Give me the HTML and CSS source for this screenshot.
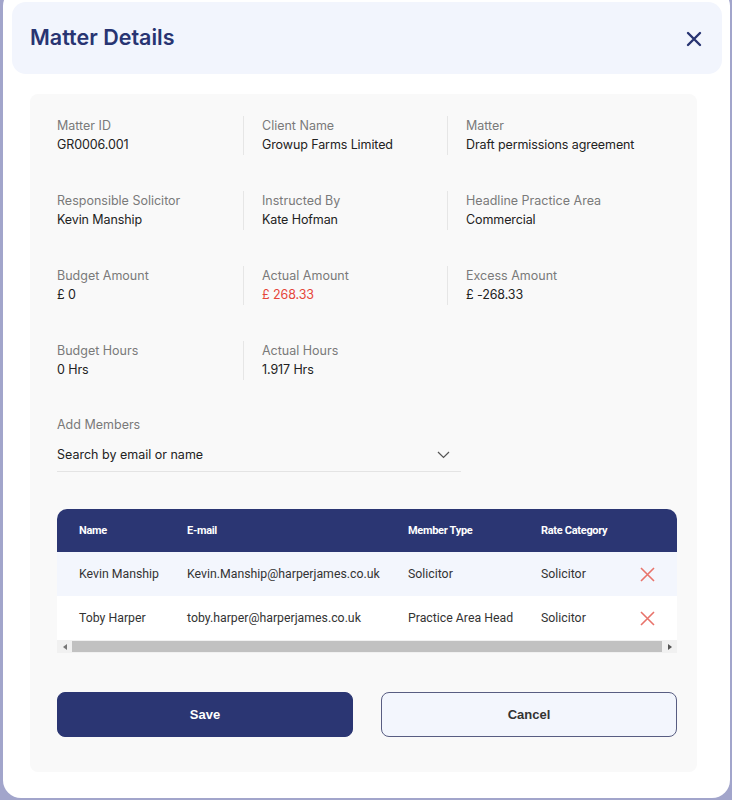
FILE: index.html
```html
<!DOCTYPE html>
<html>
<head>
<meta charset="utf-8">
<link rel="stylesheet" href="styles.css">
</head>
<body>
<div class="backdrop">
  <div class="modal">
    <div class="modal-header">
      <h1 class="title">Matter Details</h1>
      <button class="close" aria-label="Close">
        <svg width="16" height="16" viewBox="0 0 16 16"><path d="M2 2L14 14M14 2L2 14" stroke="#283472" stroke-width="2.4" stroke-linecap="round"/></svg>
      </button>
    </div>
    <div class="panel">
      <div class="info-grid">
        <div class="cell"><div class="label">Matter ID</div><div class="value">GR0006.001</div></div>
        <div class="cell div"><div class="label">Client Name</div><div class="value">Growup Farms Limited</div></div>
        <div class="cell div"><div class="label">Matter</div><div class="value">Draft permissions agreement</div></div>

        <div class="cell"><div class="label">Responsible Solicitor</div><div class="value">Kevin Manship</div></div>
        <div class="cell div"><div class="label">Instructed By</div><div class="value">Kate Hofman</div></div>
        <div class="cell div"><div class="label">Headline Practice Area</div><div class="value">Commercial</div></div>

        <div class="cell"><div class="label">Budget Amount</div><div class="value">£ 0</div></div>
        <div class="cell div"><div class="label">Actual Amount</div><div class="value red">£ 268.33</div></div>
        <div class="cell div"><div class="label">Excess Amount</div><div class="value">£ -268.33</div></div>

        <div class="cell"><div class="label">Budget Hours</div><div class="value">0 Hrs</div></div>
        <div class="cell div"><div class="label">Actual Hours</div><div class="value">1.917 Hrs</div></div>
      </div>

      <div class="members">
        <div class="label">Add Members</div>
        <div class="search">
          <span>Search by email or name</span>
          <svg width="13" height="8" viewBox="0 0 13 8"><path d="M1 1L6.5 6.5L12 1" fill="none" stroke="#555" stroke-width="1.2"/></svg>
        </div>
      </div>

      <div class="table-wrap">
        <table class="members-table">
          <thead>
            <tr><th class="c-name">Name</th><th class="c-mail">E-mail</th><th class="c-type">Member Type</th><th class="c-rate">Rate Category</th><th class="c-del"></th></tr>
          </thead>
          <tbody>
            <tr class="alt"><td>Kevin Manship</td><td>Kevin.Manship@harperjames.co.uk</td><td>Solicitor</td><td>Solicitor</td><td class="c-del"><svg width="15" height="15" viewBox="0 0 15 15"><path d="M1 1L14 14M14 1L1 14" stroke="#e8736b" stroke-width="1.6"/></svg></td></tr>
            <tr><td>Toby Harper</td><td>toby.harper@harperjames.co.uk</td><td>Practice Area Head</td><td>Solicitor</td><td class="c-del"><svg width="15" height="15" viewBox="0 0 15 15"><path d="M1 1L14 14M14 1L1 14" stroke="#e8736b" stroke-width="1.6"/></svg></td></tr>
          </tbody>
        </table>
        <div class="hscroll">
          <span class="arrow"><svg width="4" height="6" viewBox="0 0 4 6"><path d="M4 0L0 3L4 6Z" fill="#777"/></svg></span>
          <span class="thumb"></span>
          <span class="arrow"><svg width="4" height="6" viewBox="0 0 4 6"><path d="M0 0L4 3L0 6Z" fill="#555"/></svg></span>
        </div>
      </div>

      <div class="actions">
        <button class="btn save">Save</button>
        <button class="btn cancel">Cancel</button>
      </div>
    </div>
  </div>
</div>
</body>
</html>
```
FILE: styles.css
```css
* { box-sizing: border-box; }
html, body { margin: 0; padding: 0; }
body {
  width: 732px;
  height: 800px;
  overflow: hidden;
  background: #a2a5cb;
  font-family: "Inter", "DejaVu Sans", sans-serif;
}
.backdrop {
  padding-left: 3px;
  padding-right: 2px;
}
.modal {
  margin-top: -12px;
  height: 810px;
  background: #ffffff;
  border-radius: 18px;
  padding: 14px 8px 0 9px;
}
.modal-header {
  height: 72px;
  background: #f2f5fd;
  border-radius: 14px;
  display: flex;
  align-items: center;
  justify-content: space-between;
  padding: 0 20px 0 18px;
}
.title {
  margin: 0;
  font-size: 21.5px;
  font-weight: 600;
  color: #283472;
  letter-spacing: 0;
  position: relative;
  top: -1px;
}
.close {
  background: none;
  border: 0;
  padding: 0;
  width: 16px;
  height: 16px;
  display: flex;
  margin-top: 2px;
}
.panel {
  margin: 20px 25px 0 18px;
  background: #f9f9f9;
  border-radius: 8px;
  height: 678px;
  padding: 22px 28px 0 27px;
}
.info-grid {
  display: grid;
  grid-template-columns: 186px 204px 1fr;
  row-gap: 36px;
}
.cell {
  height: 39px;
}
.cell.div {
  border-left: 1px solid #e6e6e6;
  padding-left: 18px;
}
.label {
  font-size: 12.5px;
  line-height: 19px;
  color: #7a7a7a;
}
.value {
  font-size: 12.5px;
  line-height: 19px;
  color: #222;
  letter-spacing: -0.1px;
}
.value.red { color: #e5463a; }
.members {
  margin-top: 35px;
}
.search {
  width: 404px;
  height: 38px;
  margin-top: 0;
  border-bottom: 1px solid #e4e4e4;
  display: flex;
  align-items: center;
  justify-content: space-between;
  padding-right: 11px;
  font-size: 12.5px;
  color: #222;
}
.search span { position: relative; top: 2px; }
.search svg { position: relative; top: 2px; }
.table-wrap {
  margin-top: 37px;
}
.members-table {
  width: 620px;
  border-collapse: collapse;
  font-family: "Roboto", "Liberation Sans", sans-serif;
}
.members-table thead tr {
  background: #2b3673;
}
.members-table th {
  height: 43px;
  text-align: left;
  color: #fff;
  font-size: 11px;
  font-weight: 700;
  letter-spacing: -0.3px;
  padding: 0;
}
.members-table th:first-child { border-top-left-radius: 10px; }
.members-table th:last-child { border-top-right-radius: 10px; }
.members-table td {
  height: 44px;
  font-size: 12.3px;
  color: #333;
  padding: 0;
  background: #fff;
}
.members-table tr.alt td { background: #f3f6fd; }
.members-table th:first-child, .members-table td:first-child { padding-left: 22px; width: 130px; }
.members-table th:nth-child(2), .members-table td:nth-child(2) { width: 221px; }
.members-table th:nth-child(3), .members-table td:nth-child(3) { width: 133px; }
.members-table th:nth-child(4), .members-table td:nth-child(4) { width: 99px; }
.members-table td.c-del svg { display: block; margin-top: 0; }
.hscroll {
  width: 620px;
  height: 13px;
  background: #f1f1f1;
  display: flex;
  align-items: center;
}
.hscroll .arrow {
  width: 15px;
  height: 13px;
  display: flex;
  align-items: center;
  justify-content: center;
}
.hscroll .thumb {
  flex: 1;
  height: 11px;
  background: #c1c1c1;
}
.actions {
  margin-top: 39px;
  display: grid;
  grid-template-columns: 296px 296px;
  column-gap: 28px;
}
.btn {
  height: 45px;
  border-radius: 8px;
  font-family: "Liberation Sans", Arial, sans-serif;
  font-weight: 700;
  font-size: 13px;
  cursor: pointer;
}
.save {
  background: #2b3673;
  border: 1px solid #2b3673;
  color: #fff;
}
.cancel {
  background: #f3f6fd;
  border: 1px solid #585d82;
  color: #333;
}
```
